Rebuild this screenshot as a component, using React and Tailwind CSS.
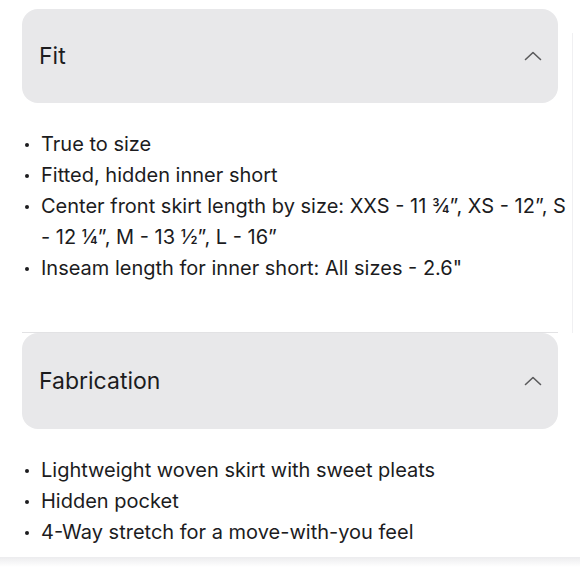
import React from "react";

const Chevron = () => (
  <svg width="18" height="10" viewBox="0 0 18 10" fill="none" className="shrink-0">
    <path d="M1.5 8.5 L9 1.5 L16.5 8.5" stroke="#5a5a5c" strokeWidth="1.6" strokeLinecap="round" strokeLinejoin="round" />
  </svg>
);

const Header = ({ title, h }) => (
  <div className={`flex ${h} items-center justify-between rounded-[16px] bg-[#e8e8ea] pl-[17px] pr-[16px]`}>
    <span className="text-[23px] leading-none text-[#1c1c1e]">{title}</span>
    <Chevron />
  </div>
);

const List = ({ items }) => (
  <ul className="-mr-[14px] flex flex-col">
    {items.map((t, i) => (
      <li key={i} className="flex text-[20px] leading-[31px] text-[#1c1c1e]">
        <span className="flex h-[31px] w-[19px] shrink-0 items-center">
          <span className="ml-[3px] h-[4px] w-[4px] rounded-full bg-[#1c1c1e]" />
        </span>
        <span>{t}</span>
      </li>
    ))}
  </ul>
);

export default function App() {
  return (
    <div className="relative h-[580px] w-[580px] overflow-hidden bg-white" style={{ fontFamily: "Inter, 'Open Sans', sans-serif" }}>
      <div className="absolute left-[572px] top-[33px] h-[300px] w-[1px] bg-[#f0f0f2]" />
      <div className="flex flex-col pl-[22px] pr-[22px] pt-[9px]">
        <Header title="Fit" h="h-[94px]" />
        <div className="pt-[26px] pb-[48px]">
          <List
            items={[
              "True to size",
              "Fitted, hidden inner short",
              "Center front skirt length by size: XXS - 11 ¾”, XS - 12”, S - 12 ¼”, M - 13 ½”, L - 16”",
              "Inseam length for inner short: All sizes - 2.6\"",
            ]}
          />
        </div>
        <div className="h-[1px] bg-[#e2e2e4]" />
        <Header title="Fabrication" h="h-[96px]" />
        <div className="pt-[26px]">
          <List
            items={[
              "Lightweight woven skirt with sweet pleats",
              "Hidden pocket",
              "4-Way stretch for a move-with-you feel",
            ]}
          />
        </div>
      </div>
      <div className="absolute left-0 top-[557px] h-[10px] w-full bg-gradient-to-b from-[#ececee] to-white" />
    </div>
  );
}
